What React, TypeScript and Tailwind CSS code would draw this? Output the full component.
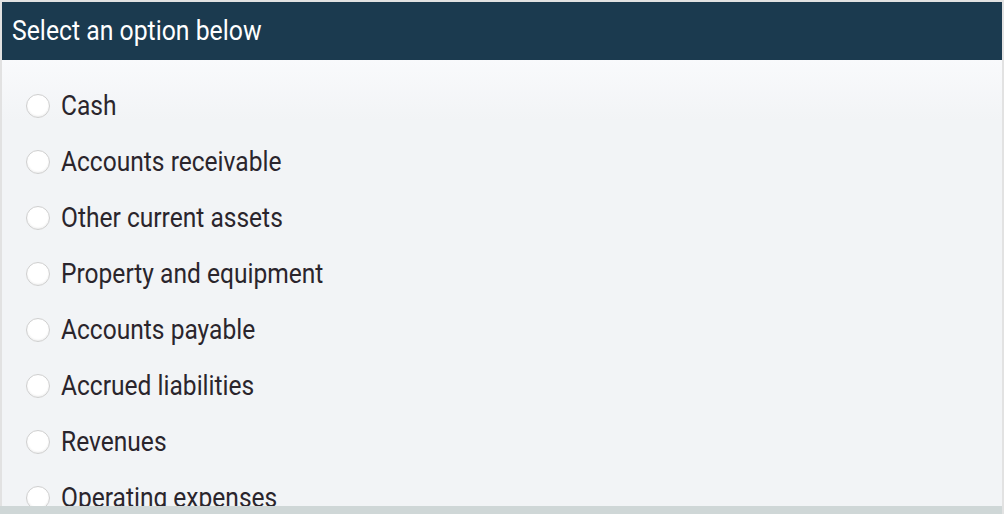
import React from "react";

const options = [
  "Cash",
  "Accounts receivable",
  "Other current assets",
  "Property and equipment",
  "Accounts payable",
  "Accrued liabilities",
  "Revenues",
  "Operating expenses",
];

export default function App() {
  return (
    <div
      className="w-[1004px] h-[514px] overflow-hidden bg-[#e2e2e2] flex flex-col"
      style={{ fontFamily: "Roboto, 'Liberation Sans', sans-serif" }}
    >
      <div className="flex-1 min-h-0 flex flex-col ml-[2px] mr-[2px] mt-[2px] overflow-hidden">
        <div className="h-[58px] shrink-0 bg-[#1b3a4f] flex items-center pl-[10px]">
          <span className="inline-block origin-left scale-x-[0.885] whitespace-nowrap text-white text-[28px] leading-none pb-[1px]">
            Select an option below
          </span>
        </div>
        <div className="flex-1 min-h-0 bg-[linear-gradient(to_bottom,#f9fafc_0px,#f2f4f6_60px,#f2f4f6_100%)] pt-[18px] overflow-hidden">
          {options.map((o) => (
            <label key={o} className="h-[56px] flex items-center pl-[24px] gap-[11px]">
              <span className="w-[24px] h-[24px] rounded-full bg-white border border-[#cfcfcf] shadow-[inset_0_-1px_2px_rgba(0,0,0,0.08)] shrink-0" />
              <span className="inline-block origin-left scale-x-[0.877] whitespace-nowrap text-[28px] text-[#2a252c] leading-none">
                {o}
              </span>
            </label>
          ))}
        </div>
      </div>
      <div className="h-[8px] shrink-0 bg-[#cfd7d7] mr-[2px]" />
    </div>
  );
}
